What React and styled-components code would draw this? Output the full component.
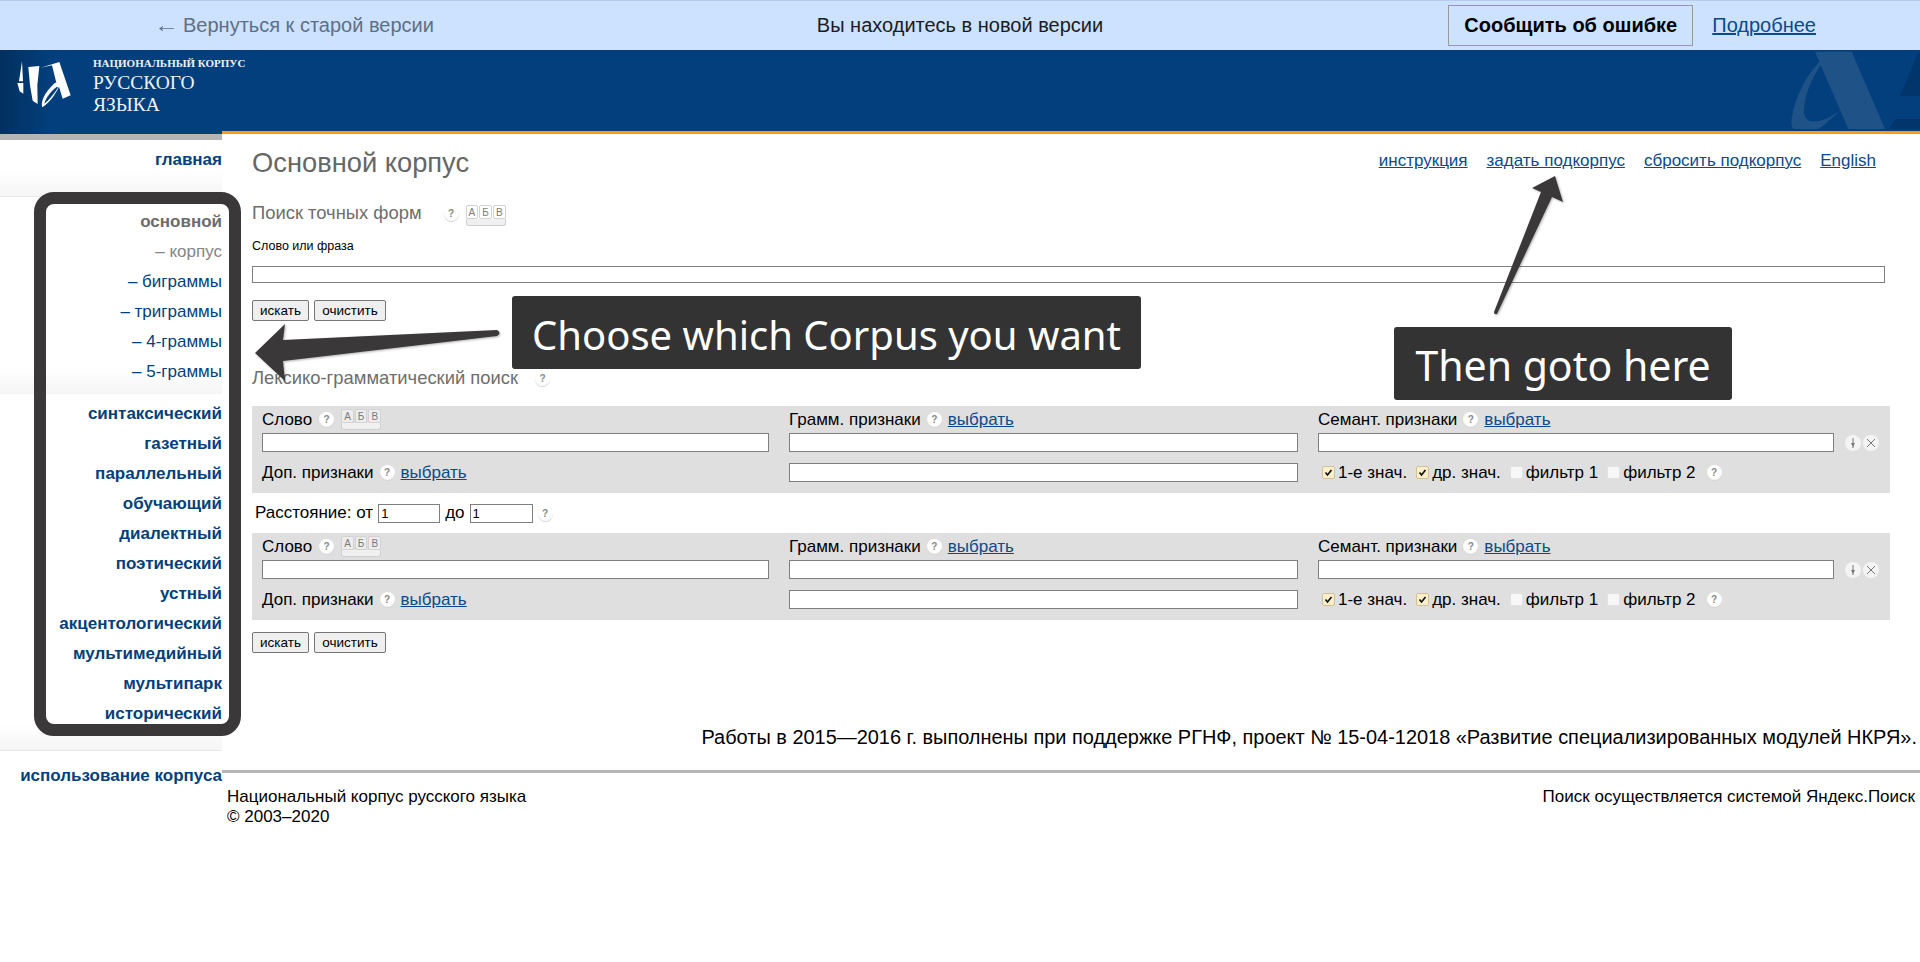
import React from "react";
import styled, { createGlobalStyle } from "styled-components";

const GlobalStyle = createGlobalStyle`
  html, body {
    margin: 0;
    padding: 0;
    background: #fff;
    font-family: "Liberation Sans", Arial, sans-serif;
    color: #000;
  }
`;

const Page = styled.div`
  position: relative;
  width: 1920px;
  height: 962px;
  overflow: hidden;
`;

const TopBar = styled.div`
  display: grid;
  grid-template-columns: 1fr auto 1fr;
  align-items: center;
  box-sizing: border-box;
  height: 50px;
  background: #cce2ff;
  border-top: 1px solid #b4cbee;
  font-size: 20px;
`;

const BackLink = styled.div`
  padding-left: 154px;
  color: #5f6f86;
`;

const BackArrow = styled.span`
  display: inline-block;
  width: 23px;
  margin-right: 6px;
  transform: scaleX(1.25);
  transform-origin: left center;
`;

const NewVersion = styled.div`
  color: #1c1c1c;
`;

const TopRight = styled.div`
  display: flex;
  align-items: center;
  justify-content: flex-end;
  gap: 19px;
  padding-right: 104px;
`;

const ReportButton = styled.div`
  display: flex;
  align-items: center;
  justify-content: center;
  box-sizing: border-box;
  width: 245px;
  height: 41px;
  border: 1px solid #999;
  font-weight: bold;
`;

const Link = styled.a`
  color: #0b4a8c;
  text-decoration: underline;
  font-size: ${p => p.$size || 17}px;
`;

const Header = styled.div`
  position: relative;
  display: flex;
  flex-direction: column;
  justify-content: space-between;
  height: 84px;
  overflow: hidden;
  background: linear-gradient(90deg, #02305f 0, #033f7c 50px);
`;

const Logo = styled.div`
  display: flex;
  gap: 13px;
  padding: 5px 0 0 10px;
`;

const LogoMark = styled.svg`
  margin-top: -3px;
`;

const LogoText = styled.div`
  font-family: "Liberation Serif", serif;
  color: #eef2f7;
  font-size: 19.5px;
  line-height: 22px;
  padding-top: 1px;
`;

const LogoSmall = styled.div`
  font-size: 11px;
  line-height: 15px;
  margin-bottom: 1px;
  font-weight: bold;
`;

const Watermark = styled.svg`
  position: absolute;
  right: 0;
  top: 0;
`;

const OrangeRule = styled.div`
  position: relative;
  height: 3px;
  margin-left: 222px;
  background: #ff9a0d;
`;

const Body = styled.div`
  display: grid;
  grid-template-columns: 222px 1fr;
`;

const Sidebar = styled.nav`
  border-top: 6px solid #b5b5b5;
  text-align: right;
  font-size: 17px;
`;

const SideSection = styled.div`
  box-sizing: border-box;
  height: ${p => p.$height}px;
  padding-top: ${p => p.$top}px;
  ${p => p.$fade && "background: linear-gradient(180deg, #fff calc(100% - 26px), #f5f5f5 100%);"}
  ${p => p.$line && "border-bottom: 1px solid #e8e8e8;"}
`;

const SideItem = styled.div`
  height: 30px;
  line-height: 30px;
  white-space: nowrap;
  font-weight: ${p => (p.$regular ? "normal" : "bold")};
  color: ${p => p.$color || "#033f7c"};
`;

const Main = styled.main`
  min-width: 0;
`;

const Content = styled.div`
  padding: 0 31px 0 30px;
`;

const TitleRow = styled.div`
  display: flex;
  align-items: center;
  justify-content: space-between;
  height: 58px;
`;

const Title = styled.h1`
  margin: 0;
  font-size: 27.3px;
  font-weight: normal;
  color: #666;
`;

const TopLinks = styled.div`
  display: flex;
  gap: 19px;
  padding: 0 13px 4px 0;
`;

const SectionHead = styled.div`
  display: flex;
  align-items: center;
  margin-top: ${p => p.$top}px;
  height: 24px;
  font-size: 18.4px;
  color: #6e6e6e;
`;

const SmallLabel = styled.div`
  margin-top: 13px;
  font-size: 12.5px;
  line-height: 16px;
`;

const Field = styled.input`
  display: block;
  box-sizing: border-box;
  width: ${p => p.$width || "100%"};
  height: ${p => p.$height || 19}px;
  margin: 0;
  padding: 0 2px;
  border: 1px solid #7f7f7f;
  border-radius: 0;
  background: #fff;
  font: 13px "Liberation Sans", Arial, sans-serif;
`;

const WideField = styled(Field)`
  margin-top: 12px;
  width: 1633px;
`;

const Buttons = styled.div`
  display: flex;
  gap: 5px;
  margin-top: ${p => p.$top}px;
`;

const Button = styled.button`
  box-sizing: border-box;
  height: 21px;
  width: ${p => p.$width}px;
  padding: 0;
  background: #efefef;
  border: 1px solid #767676;
  border-radius: 2px;
  font: 13.5px "Liberation Sans", Arial, sans-serif;
  color: #000;
`;

const PanelSpacer = styled.div`
  height: 16px;
`;

const Panel = styled.div`
  display: grid;
  grid-template-columns: 507px 509px 516px auto;
  grid-template-rows: 27px 19px 30px;
  column-gap: 20px;
  box-sizing: border-box;
  width: 1638px;
  height: 87px;
  padding-left: 10px;
  background: #dfdfdf;
  font-size: 17px;
`;

const Cell = styled.div`
  display: flex;
  align-items: center;
  align-self: ${p => (p.$end ? "end" : "stretch")};
  height: ${p => (p.$end ? "19px" : "auto")};
  padding-left: ${p => p.$left || 0}px;
  white-space: nowrap;
`;

const HintIcon = styled.span`
  display: inline-flex;
  align-items: center;
  justify-content: center;
  flex: none;
  width: 15px;
  height: 15px;
  margin: ${p => p.$margin || "0 7px"};
  border-radius: 50%;
  background: radial-gradient(circle at 50% 40%, #fff 55%, #e8e8e8 100%);
  color: #888;
  font-size: 10px;
  font-weight: bold;
  box-shadow: 0 1px 1px #d4d4d4;
`;

const KeysBox = styled.span`
  display: inline-flex;
  flex-direction: column;
  flex: none;
  width: 40px;
  height: 21px;
  margin-top: ${p => p.$top || 0}px;
`;

const KeysRow = styled.span`
  display: flex;
  gap: 1px;
  height: 14px;
`;

const Key = styled.span`
  flex: 1;
  text-align: center;
  font-size: 10px;
  line-height: 13px;
  color: #7a7a7a;
  background: rgba(255, 255, 255, 0.45);
  border: 1px solid #d2d2d2;
  border-radius: 2px;
`;

const SpaceKey = styled.span`
  height: 7px;
  box-sizing: border-box;
  background: #f0f0f0;
  border: 1px solid #cfcfcf;
  border-top: none;
  border-radius: 0 0 3px 3px;
`;

const RoundTool = styled.span`
  display: inline-flex;
  align-items: center;
  justify-content: center;
  width: 16px;
  height: 16px;
  border-radius: 50%;
  background: #f4f4f4;
`;

const Tools = styled.div`
  display: flex;
  gap: 2px;
  align-items: center;
  margin-left: -9px;
`;

const FilterLabel = styled.span`
  display: inline-flex;
  align-items: center;
  gap: 3px;
  margin-right: 9px;
`;

const Tick = styled.span`
  display: inline-flex;
  align-items: center;
  justify-content: center;
  width: 13px;
  height: 13px;
  box-sizing: border-box;
  border: 1px solid ${p => (p.$on ? "#d3bf94" : "#e2e2e2")};
  border-radius: 2px;
  background: ${p => (p.$on ? "#fbeecb" : "#f7f7f7")};
`;

const Distance = styled.div`
  display: flex;
  align-items: center;
  gap: 5px;
  height: 40px;
  padding-left: 3px;
  font-size: 17px;
`;

const Funding = styled.div`
  margin-top: 72px;
  padding-right: 3px;
  text-align: right;
  font-size: 19.95px;
  line-height: 24px;
  white-space: nowrap;
`;

const GrayRule = styled.div`
  height: 3px;
  margin-top: 21px;
  background: #b5b5b5;
`;

const Footer = styled.footer`
  display: flex;
  justify-content: space-between;
  padding: 14px 5px 0;
  font-size: 17px;
  line-height: 20px;
`;

const Frame = styled.div`
  position: absolute;
  left: 34px;
  top: 192px;
  width: 207px;
  height: 544px;
  box-sizing: border-box;
  border: 12px solid #3a3838;
  border-radius: 20px;
`;

const Callout = styled.div`
  position: absolute;
  left: ${p => p.$left}px;
  top: ${p => p.$top}px;
  width: ${p => p.$width}px;
  height: 73px;
  box-sizing: border-box;
  padding-top: 3px;
  display: flex;
  align-items: center;
  justify-content: center;
  border-radius: 3px;
  background: #333;
  color: #fff;
  font-family: "Comic Sans MS", "Noto Sans", sans-serif;
  font-size: ${p => p.$size}px;
  white-space: nowrap;
`;

const Arrow = styled.svg`
  position: absolute;
  left: ${p => p.$left}px;
  top: ${p => p.$top}px;
  filter: drop-shadow(1px 1px 1px rgba(0, 0, 0, 0.3));
`;

const Hint = ({ margin }) => <HintIcon $margin={margin}>?</HintIcon>;

const Keys = ({ top }) => (
  <KeysBox $top={top}>
    <KeysRow>
      <Key>А</Key>
      <Key>Б</Key>
      <Key>В</Key>
    </KeysRow>
    <SpaceKey />
  </KeysBox>
);

const Filter = ({ on, children }) => (
  <FilterLabel>
    <Tick $on={on}>
      {on && (
        <svg width="11" height="11" viewBox="0 0 11 11">
          <path d="M2.5 5.5 L4.5 8 L8.5 3" fill="none" stroke="#111" strokeWidth="1.7" />
        </svg>
      )}
    </Tick>
    {children}
  </FilterLabel>
);

const SearchPanel = () => (
  <Panel>
    <Cell>
      Слово
      <Hint />
      <Keys />
    </Cell>
    <Cell>
      Грамм. признаки
      <Hint margin="0 6px" />
      <Link>выбрать</Link>
    </Cell>
    <Cell>
      Семант. признаки
      <Hint margin="0 6px" />
      <Link>выбрать</Link>
    </Cell>
    <div />
    <Field />
    <Field />
    <Field />
    <Tools>
      <RoundTool>
        <svg width="10" height="12" viewBox="0 0 10 12">
          <path d="M5 1 V11" stroke="#777" strokeWidth="1" />
          <path d="M3 6 H7 L5 10 Z" fill="#777" />
        </svg>
      </RoundTool>
      <RoundTool>
        <svg width="10" height="10" viewBox="0 0 10 10">
          <path d="M1 1 L9 9 M9 1 L1 9" stroke="#777" strokeWidth="1" />
        </svg>
      </RoundTool>
    </Tools>
    <Cell $end>
      Доп. признаки
      <Hint margin="0 6px" />
      <Link>выбрать</Link>
    </Cell>
    <Cell $end>
      <Field />
    </Cell>
    <Cell $end $left={4}>
      <Filter on>1-е знач.</Filter>
      <Filter on>др. знач.</Filter>
      <Filter>фильтр 1</Filter>
      <Filter>фильтр 2</Filter>
      <Hint margin="0 0 0 2px" />
    </Cell>
  </Panel>
);

const corpora = [
  "синтаксический",
  "газетный",
  "параллельный",
  "обучающий",
  "диалектный",
  "поэтический",
  "устный",
  "акцентологический",
  "мультимедийный",
  "мультипарк",
  "исторический"
];

const App = () => (
  <Page>
    <GlobalStyle />
    <TopBar>
      <BackLink>
        <BackArrow>←</BackArrow>Вернуться к старой версии
      </BackLink>
      <NewVersion>Вы находитесь в новой версии</NewVersion>
      <TopRight>
        <ReportButton>Сообщить об ошибке</ReportButton>
        <Link $size={20}>Подробнее</Link>
      </TopRight>
    </TopBar>

    <Header>
      <Logo>
        <LogoMark width="70" height="70" viewBox="0 0 210 210">
          <g fill="#fff">
            <path d="M36 28 L39 88 L27 88 Z" />
            <path d="M22 93 L40 93 L40 125 L29 118 Z" />
            <path d="M55 45 L88 42 L82 100 L83 156 L68 146 L60 100 Z" />
            <path
              fillRule="evenodd"
              d="M92 47 L148 30 L182 130 L158 140 L147 104 C135 130 115 155 97 166 C92 150 100 125 135 92 L139 92 L126 40 Z M141 104 C125 115 108 135 103 155 C118 143 132 125 144 107 Z"
            />
          </g>
        </LogoMark>
        <LogoText>
          <LogoSmall>НАЦИОНАЛЬНЫЙ КОРПУС</LogoSmall>
          РУССКОГО
          <br />
          ЯЗЫКА
        </LogoText>
      </Logo>
      <Watermark width="130" height="85" viewBox="0 0 390 255">
        <path
          fill="#1f5388"
          d="M75 5 H185 L285 237 H175 L92 45 C60 95 42 140 42 185 C42 225 95 225 150 180 C125 205 105 225 85 237 H15 C5 237 3 225 5 205 C15 140 50 75 88 35 Z"
        />
        <path fill="#02356b" d="M390 8 H385 L330 138 H390 Z M298 237 L315 208 H390 V237 Z" />
      </Watermark>
      <OrangeRule />
    </Header>

    <Body>
      <Sidebar>
        <SideSection $height={57} $top={5} $fade $line>
          <SideItem>главная</SideItem>
        </SideSection>
        <SideSection $height={197} $top={10} $fade>
          <SideItem $color="#6b6b6b">основной</SideItem>
          <SideItem $regular $color="#858585">– корпус</SideItem>
          <SideItem $regular>– биграммы</SideItem>
          <SideItem $regular>– триграммы</SideItem>
          <SideItem $regular>– 4-граммы</SideItem>
          <SideItem $regular>– 5-граммы</SideItem>
        </SideSection>
        <SideSection $height={357} $top={5} $fade $line>
          {corpora.map(name => (
            <SideItem key={name}>{name}</SideItem>
          ))}
        </SideSection>
        <SideSection $height={50} $top={10}>
          <SideItem>использование корпуса</SideItem>
        </SideSection>
      </Sidebar>

      <Main>
        <Content>
          <TitleRow>
            <Title>Основной корпус</Title>
            <TopLinks>
              <Link>инструкция</Link>
              <Link>задать подкорпус</Link>
              <Link>сбросить подкорпус</Link>
              <Link>English</Link>
            </TopLinks>
          </TitleRow>
          <SectionHead $top={9}>
            Поиск точных форм
            <Hint margin="0 7px 0 22px" />
            <Keys top={5} />
          </SectionHead>
          <SmallLabel>Слово или фраза</SmallLabel>
          <WideField $height={17} />
          <Buttons $top={17}>
            <Button $width={57}>искать</Button>
            <Button $width={72}>очистить</Button>
          </Buttons>
          <SectionHead $top={45}>
            Лексико-грамматический поиск
            <Hint margin="0 0 0 17px" />
          </SectionHead>
          <PanelSpacer />
          <SearchPanel />
          <Distance>
            Расстояние: от
            <Field $width="62px" defaultValue="1" />
            до
            <Field $width="63px" defaultValue="1" />
            <Hint margin="0" />
          </Distance>
          <SearchPanel />
          <Buttons $top={12}>
            <Button $width={57}>искать</Button>
            <Button $width={72}>очистить</Button>
          </Buttons>
        </Content>
        <Funding>Работы в 2015—2016 г. выполнены при поддержке РГНФ, проект № 15-04-12018 «Развитие специализированных модулей НКРЯ».</Funding>
        <GrayRule />
        <Footer>
          <div>
            Национальный корпус русского языка
            <br />© 2003–2020
          </div>
          <div>Поиск осуществляется системой Яндекс.Поиск</div>
        </Footer>
      </Main>
    </Body>

    <Frame />
    <Arrow $left={250} $top={318} width="260" height="70" viewBox="250 318 260 70">
      <path
        fill="#3a3838"
        d="M255 353 L285 324 L283 340 L497 330 Q502 333 497 336 L283 361 L285 381 Z"
      />
    </Arrow>
    <Arrow $left={1488} $top={170} width="82" height="150" viewBox="1488 170 82 150">
      <path
        fill="#3a3838"
        d="M1555 176 L1563 202 L1552 197 L1497 314 Q1494 315 1494 312 L1541 192 L1532 188 Z"
      />
    </Arrow>
    <Callout $left={512} $top={296} $width={629} $size={40}>Choose which Corpus you want</Callout>
    <Callout $left={1394} $top={327} $width={338} $size={41}>Then goto here</Callout>
  </Page>
);

export default App;
